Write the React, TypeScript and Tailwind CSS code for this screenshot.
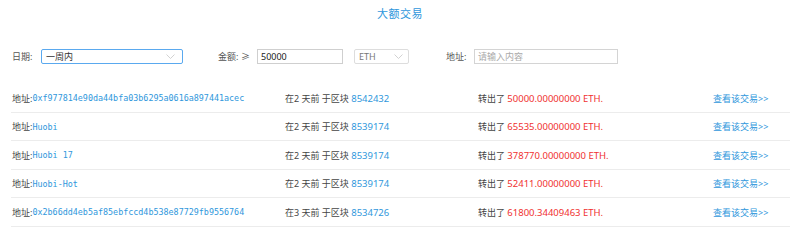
import React from "react";

const rows = [
  { addr: "0xf977814e90da44bfa03b6295a0616a897441acec", days: "2", block: "8542432", amt: "50000.00000000" },
  { addr: "Huobi", days: "2", block: "8539174", amt: "65535.00000000" },
  { addr: "Huobi 17", days: "2", block: "8539174", amt: "378770.00000000" },
  { addr: "Huobi-Hot", days: "2", block: "8539174", amt: "52411.00000000" },
  { addr: "0x2b66dd4eb5af85ebfccd4b538e87729fb9556764", days: "3", block: "8534726", amt: "61800.34409463" },
];

const sans = { fontFamily: '"Noto Sans", "Noto Sans CJK SC", sans-serif' };
const mono = { fontFamily: '"DejaVu Sans Mono", "Liberation Mono", monospace' };

function Chevron() {
  return (
    <svg width="9" height="5" viewBox="0 0 9 5" className="shrink-0">
      <path d="M0.5 0.5 L4.5 4.5 L8.5 0.5" fill="none" stroke="#c6c6c6" strokeWidth="0.8" />
    </svg>
  );
}

export default function App() {
  return (
    <div className="w-[800px] h-[241px] bg-white text-[#444] overflow-hidden" style={sans}>
      <div className="h-[28px] flex items-center justify-center pt-[1px]">
        <span className="text-[11px] text-[#2f97dc] tracking-[0.5px]">大额交易</span>
      </div>
      <div className="h-[56px] flex items-start pt-[21px] pl-[12px] text-[9px] leading-none">
        <div className="flex items-center h-[15px]">
          <span className="w-[29px] text-[#555]">日期:</span>
          <div className="w-[142px] h-[15px] border border-[#5aa9ef] rounded-[2px] flex items-center justify-between pl-[4px] pr-[7px] text-[#333]">
            <span>一周内</span>
            <Chevron />
          </div>
        </div>
        <div className="flex items-center h-[15px] ml-[35px]">
          <span className="w-[23px] text-[#555]">金额:</span>
          <span className="w-[16px] text-[#555]">≥</span>
          <div className="w-[86px] h-[15px] border border-[#cfcfcf] flex items-center pl-[3px] text-[#222]">50000</div>
          <div className="ml-[11px] w-[55px] h-[15px] border border-[#ddd] rounded-[2px] flex items-center justify-between pl-[4px] pr-[5px] text-[#777]">
            <span>ETH</span>
            <Chevron />
          </div>
        </div>
        <div className="flex items-center h-[15px] ml-[37px]">
          <span className="w-[28px] text-[#555]">地址:</span>
          <div className="w-[144px] h-[15px] border border-[#d4d4d4] flex items-center pl-[3px] text-[#aaa]">请输入内容</div>
        </div>
      </div>
      <div className="ml-[11px] w-[779px]">
        {rows.map((r, i) => (
          <div key={i} className="h-[28.5px] border-b border-[#ececec] flex items-center text-[9px] leading-none pt-[1px]">
            <div className="w-[274px] pl-[1px] flex items-center">
              <span className="text-[#444]">地址:</span>
              <span className="text-[#2f97dc] text-[8.4px]" style={mono}>{r.addr}</span>
            </div>
            <div className="w-[193px] flex items-center whitespace-pre">
              <span className="text-[#444]">在{r.days} 天前 于区块 </span>
              <span className="text-[#2f97dc] text-[9.5px]">{r.block}</span>
            </div>
            <div className="w-[235px] flex items-center whitespace-pre">
              <span className="text-[#444]">转出了 </span>
              <span className="text-[#f0302f] text-[9.5px]">{r.amt} ETH.</span>
            </div>
            <div className="flex items-center text-[#2f97dc]">查看该交易&gt;&gt;</div>
          </div>
        ))}
      </div>
    </div>
  );
}
